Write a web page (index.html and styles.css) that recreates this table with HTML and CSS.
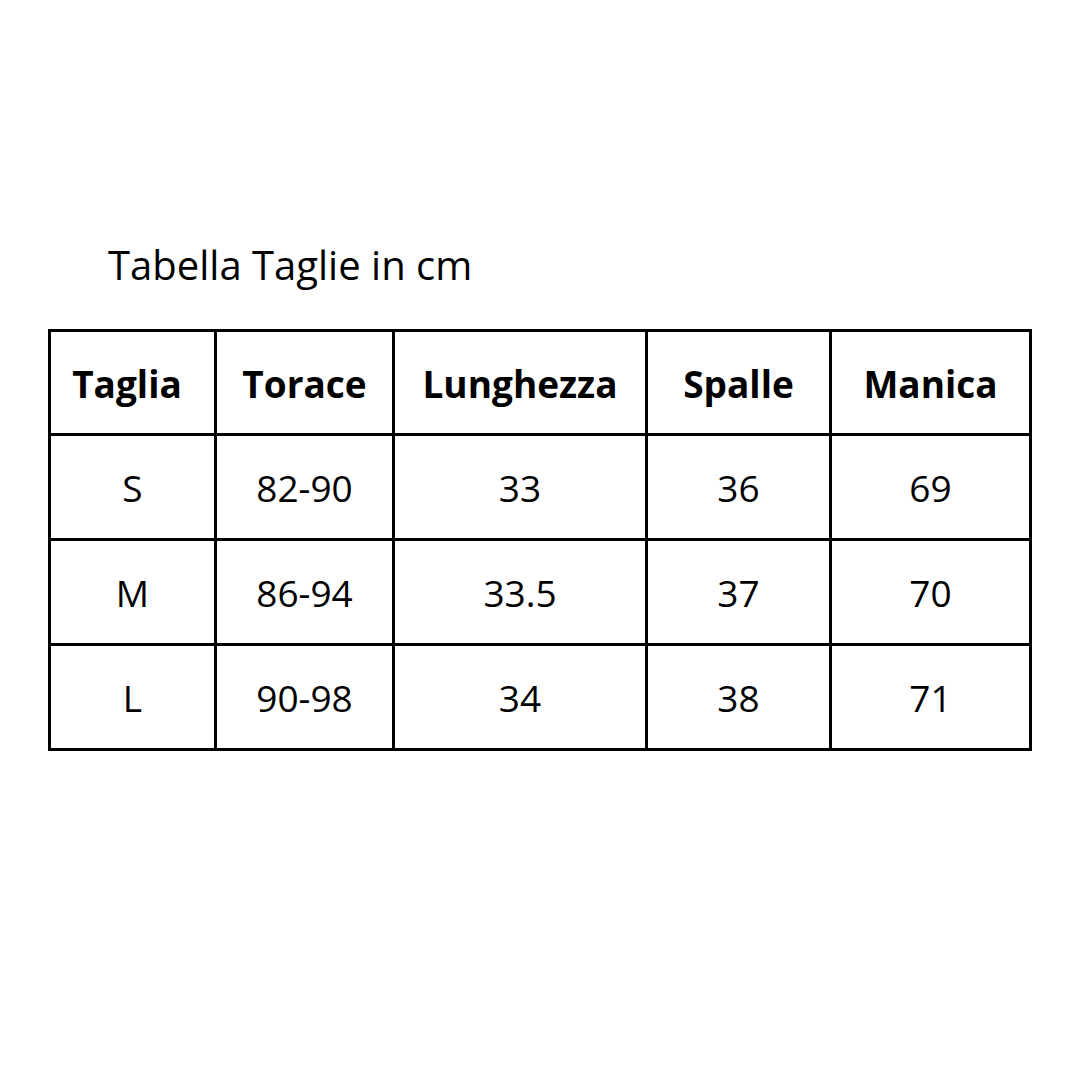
FILE: index.html
```html
<!DOCTYPE html>
<html lang="it">
<head>
<meta charset="utf-8">
<title>Tabella Taglie</title>
<link rel="stylesheet" href="styles.css">
</head>
<body>
<div class="page">
  <h1 class="title">Tabella Taglie in cm</h1>
  <div class="grid">
    <div class="cell head first">Taglia</div>
    <div class="cell head">Torace</div>
    <div class="cell head">Lunghezza</div>
    <div class="cell head">Spalle</div>
    <div class="cell head">Manica</div>

    <div class="cell">S</div>
    <div class="cell">82-90</div>
    <div class="cell">33</div>
    <div class="cell">36</div>
    <div class="cell">69</div>

    <div class="cell">M</div>
    <div class="cell">86-94</div>
    <div class="cell">33.5</div>
    <div class="cell">37</div>
    <div class="cell">70</div>

    <div class="cell">L</div>
    <div class="cell">90-98</div>
    <div class="cell">34</div>
    <div class="cell">38</div>
    <div class="cell">71</div>
  </div>
</div>
</body>
</html>
```
FILE: styles.css
```css
html, body {
  margin: 0;
  padding: 0;
  background: #ffffff;
}

.page {
  width: 1080px;
  height: 1080px;
  padding-top: 238px;
  padding-left: 48px;
  box-sizing: border-box;
  font-family: "Open Sans", "Liberation Sans", sans-serif;
  color: #000000;
}

.title {
  margin: 0 0 37px 60px;
  font-size: 40px;
  line-height: 54px;
  font-weight: 400;
  height: 54px;
}

.grid {
  display: grid;
  grid-template-columns: 166px 178px 253px 184px 200px;
  grid-template-rows: 104px 105px 105px 105px;
  width: 984px;
  box-sizing: border-box;
  border-left: 3px solid #000;
  border-top: 3px solid #000;
}

.cell {
  display: flex;
  align-items: center;
  justify-content: center;
  border-right: 3px solid #000;
  border-bottom: 3px solid #000;
  font-size: 37px;
  font-weight: 400;
  padding-top: 1px;
}

.cell.head {
  font-weight: 700;
}

.cell.first {
  padding-right: 11px;
}
```
